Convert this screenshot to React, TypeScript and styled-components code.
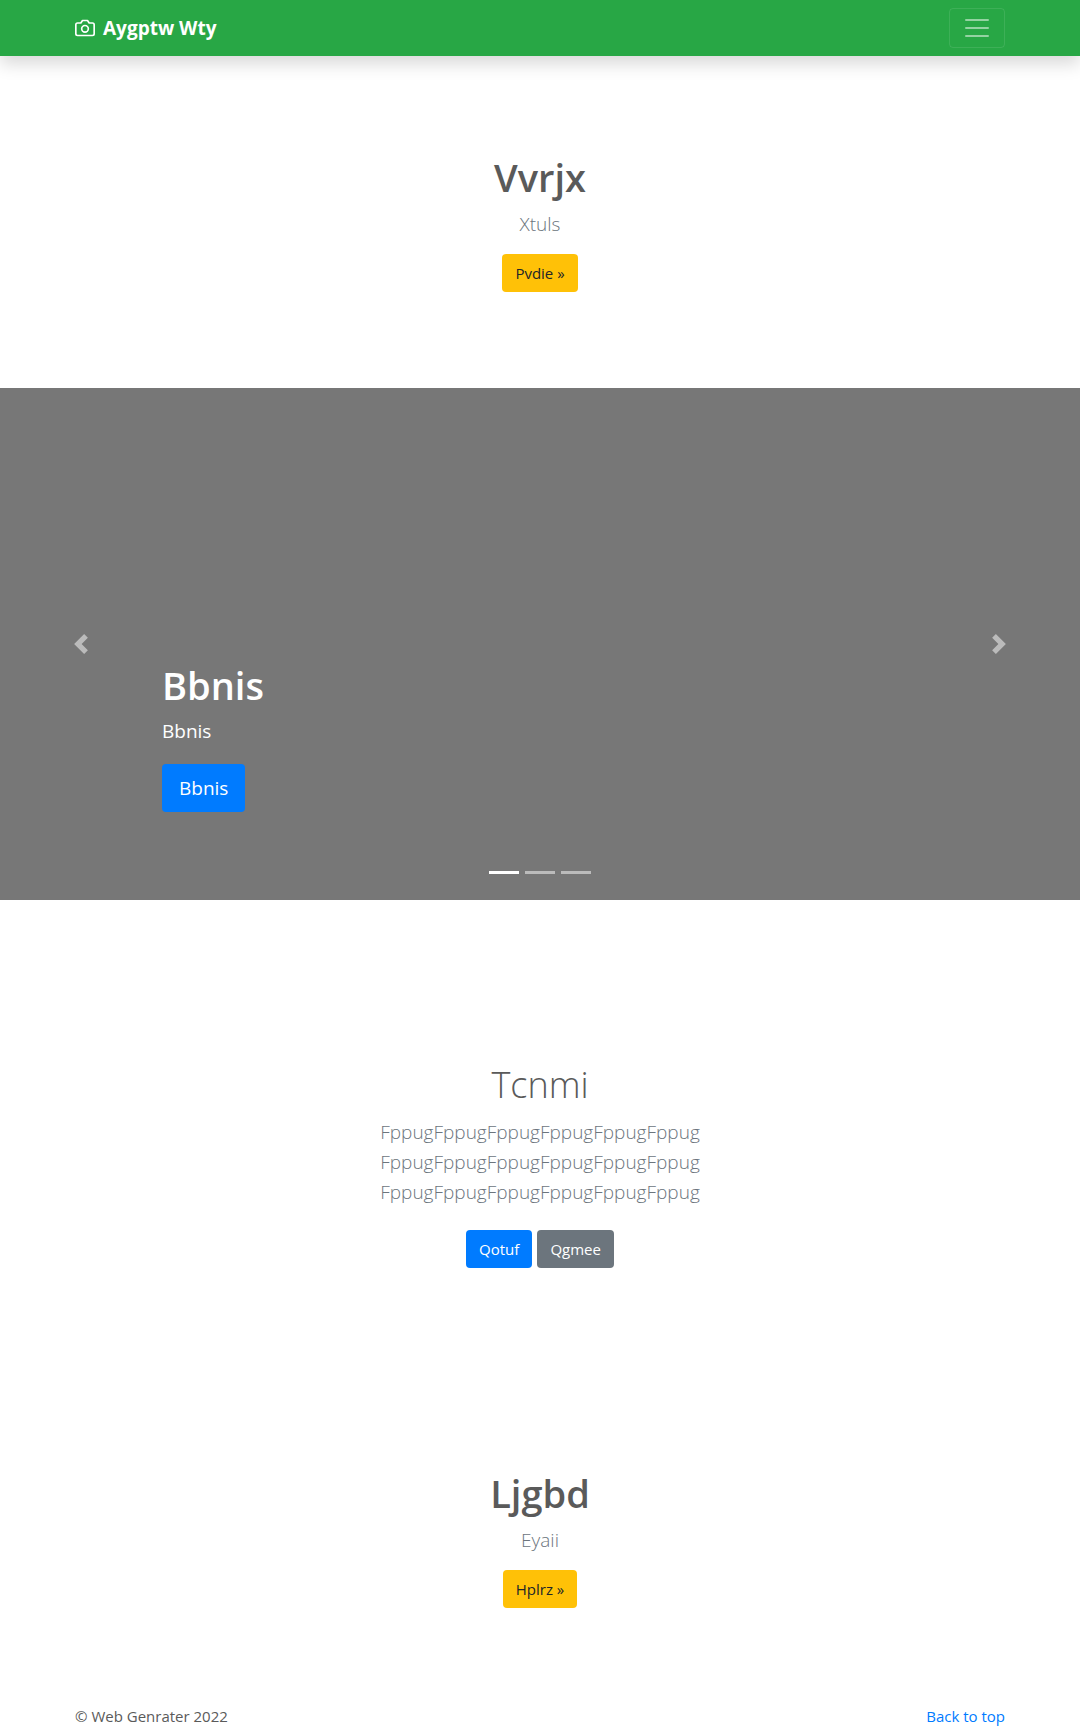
import React, { useState } from 'react';
import styled, { createGlobalStyle } from 'styled-components';

const GlobalStyle = createGlobalStyle`
  *, *::before, *::after { box-sizing: border-box; }
  html { scroll-behavior: smooth; }
  body {
    margin: 0;
    background: #fff;
    color: #5a5a5a;
    font-family: "Segoe UI", "Open Sans", "Noto Sans", sans-serif;
    font-size: 15px;
    line-height: 24px;
  }
`;

const Container = styled.div`
  display: flex;
  align-items: center;
  justify-content: space-between;
  width: 100%;
  max-width: 960px;
  margin: 0 auto;
  padding: 0 15px;
`;

const Navbar = styled.header`
  position: sticky;
  top: 0;
  z-index: 10;
  display: flex;
  padding: 8px 0;
  background: #28a745;
  box-shadow: 0 8px 16px rgba(0, 0, 0, 0.15);
`;

const Brand = styled.a`
  display: flex;
  align-items: center;
  gap: 8px;
  color: #fff;
  font-size: 19px;
  font-weight: 700;
  line-height: 32px;
  text-decoration: none;
`;

const Toggler = styled.button`
  display: flex;
  align-items: center;
  justify-content: center;
  width: 56px;
  height: 40px;
  padding: 0;
  border: 1px solid rgba(255, 255, 255, 0.1);
  border-radius: 4px;
  background: transparent;
  cursor: pointer;
`;

const Section = styled.section<{ $top: number; $bottom: number }>`
  display: flex;
  flex-direction: column;
  align-items: center;
  padding: ${(p) => p.$top}px 15px ${(p) => p.$bottom}px;
  text-align: center;
`;

const Title = styled.h1<{ $light?: boolean }>`
  margin: 0 0 7px;
  font-size: ${(p) => (p.$light ? 36 : 38)}px;
  font-weight: ${(p) => (p.$light ? 300 : 600)};
  line-height: 50px;
`;

const Lead = styled.p`
  max-width: 450px;
  margin: 0 0 15px;
  color: #6c757d;
  font-size: 19px;
  font-weight: 300;
  line-height: 30px;
`;

const Actions = styled.div`
  display: flex;
  gap: 5px;
  padding: 8px 0;
`;

const tones = {
  primary: { background: '#007bff', color: '#fff' },
  secondary: { background: '#6c757d', color: '#fff' },
  warning: { background: '#ffc107', color: '#212529' },
};

const Button = styled.button<{ $tone: keyof typeof tones; $large?: boolean }>`
  padding: ${(p) => (p.$large ? '9px 17px' : '7px 13px')};
  border: 0;
  border-radius: 4px;
  background: ${(p) => tones[p.$tone].background};
  color: ${(p) => tones[p.$tone].color};
  font-family: inherit;
  font-size: ${(p) => (p.$large ? 19 : 15)}px;
  line-height: ${(p) => (p.$large ? 30 : 24)}px;
  cursor: pointer;
`;

const Carousel = styled.section`
  display: grid;
  grid-template-columns: 15% 1fr 15%;
  grid-template-rows: 1fr auto;
  min-height: 512px;
  background: #777;
  color: #fff;
`;

const Control = styled.button`
  display: flex;
  align-items: center;
  justify-content: center;
  grid-row: 1 / 3;
  padding: 0;
  border: 0;
  background: transparent;
  opacity: 0.5;
  cursor: pointer;
`;

const Caption = styled.div`
  align-self: end;
  padding-bottom: 59px;
`;

const CaptionText = styled.p`
  margin: 0 0 19px;
  font-size: 19px;
  line-height: 28px;
`;

const Indicators = styled.div`
  display: flex;
  grid-column: 2;
  grid-row: 2;
  justify-content: center;
  gap: 6px;
  padding-bottom: 26px;
`;

const Indicator = styled.button<{ $active: boolean }>`
  width: 30px;
  height: 3px;
  padding: 0;
  border: 0;
  background: #fff;
  opacity: ${(p) => (p.$active ? 1 : 0.5)};
  cursor: pointer;
`;

const TopLink = styled.a`
  color: #007bff;
  text-decoration: none;
`;

const CameraIcon = () => (
  <svg width="20" height="20" viewBox="0 0 24 24" fill="none" stroke="currentColor" strokeWidth="2" strokeLinecap="round" strokeLinejoin="round" aria-hidden="true">
    <path d="M23 19a2 2 0 0 1-2 2H3a2 2 0 0 1-2-2V8a2 2 0 0 1 2-2h4l2-3h6l2 3h4a2 2 0 0 1 2 2z" />
    <circle cx="12" cy="13" r="4" />
  </svg>
);

const MenuIcon = () => (
  <svg width="30" height="30" viewBox="0 0 30 30" aria-hidden="true">
    <path stroke="rgba(255,255,255,0.5)" strokeLinecap="round" strokeMiterlimit="10" strokeWidth="2" d="M4 7h22M4 15h22M4 23h22" />
  </svg>
);

const Chevron = ({ d }: { d: string }) => (
  <svg width="20" height="20" viewBox="0 0 8 8" fill="#fff" aria-hidden="true">
    <path d={d} />
  </svg>
);

const row = 'FppugFppugFppugFppugFppugFppug';

export default function App() {
  const [slide, setSlide] = useState(0);
  const move = (step: number) => setSlide((slide + step + 3) % 3);

  return (
    <>
      <GlobalStyle />
      <Navbar id="top">
        <Container>
          <Brand href="#top">
            <CameraIcon />
            <span>Aygptw Wty</span>
          </Brand>
          <Toggler type="button" aria-label="Toggle navigation">
            <MenuIcon />
          </Toggler>
        </Container>
      </Navbar>
      <main>
        <Section $top={96} $bottom={96}>
          <Title>Vvrjx</Title>
          <Lead>Xtuls</Lead>
          <Button type="button" $tone="warning">Pvdie »</Button>
        </Section>
        <Carousel aria-label="Carousel">
          <Control type="button" aria-label="Previous" onClick={() => move(-1)}>
            <Chevron d="M5.25 0l-4 4 4 4 1.5-1.5-2.5-2.5 2.5-2.5-1.5-1.5z" />
          </Control>
          <Caption>
            <Title>Bbnis</Title>
            <CaptionText>Bbnis</CaptionText>
            <Button type="button" $tone="primary" $large>Bbnis</Button>
          </Caption>
          <Control type="button" aria-label="Next" onClick={() => move(1)}>
            <Chevron d="M2.75 0l-1.5 1.5 2.5 2.5-2.5 2.5 1.5 1.5 4-4-4-4z" />
          </Control>
          <Indicators>
            {[0, 1, 2].map((i) => (
              <Indicator key={i} type="button" aria-label={`Slide ${i + 1}`} $active={i === slide} onClick={() => setSlide(i)} />
            ))}
          </Indicators>
        </Carousel>
        <Section $top={160} $bottom={96}>
          <Title $light>Tcnmi</Title>
          <Lead>{`${row} ${row} ${row}`}</Lead>
          <Actions>
            <Button type="button" $tone="primary">Qotuf</Button>
            <Button type="button" $tone="secondary">Qgmee</Button>
          </Actions>
        </Section>
        <Section $top={96} $bottom={96}>
          <Title>Ljgbd</Title>
          <Lead>Eyaii</Lead>
          <Button type="button" $tone="warning">Hplrz »</Button>
        </Section>
      </main>
      <Container as="footer">
        <span>© Web Genrater 2022</span>
        <TopLink href="#top">Back to top</TopLink>
      </Container>
    </>
  );
}
